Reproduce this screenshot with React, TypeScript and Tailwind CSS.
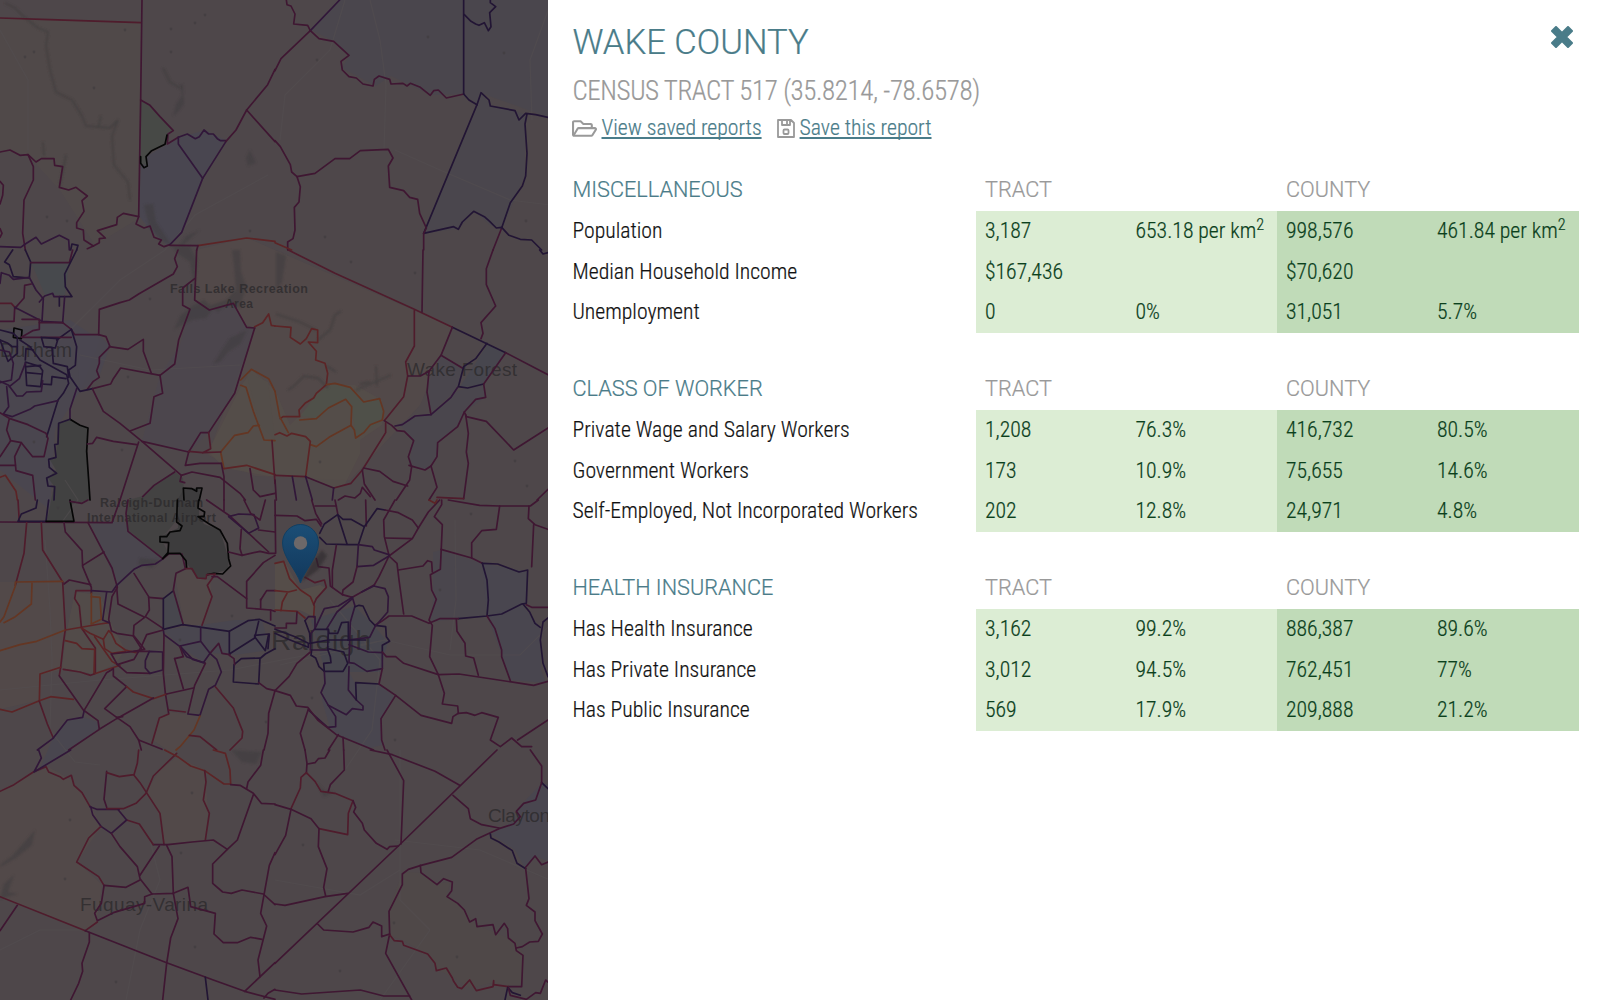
import React from "react";
import { FaRegFolderOpen } from "react-icons/fa";

type Tile = { x: number; y: number; lines: [string, string][] };

const COLORS: Record<string, string> = {
  m: "#3f1732",
  r: "#4f1c2c",
  e: "#5c2426",
  p: "#311739",
  n: "#221534",
  o: "#643623",
  k: "#060606",
};

// Tract boundaries, stored per map tile in third-of-a-pixel units.
const TILES: Tile[] = [
  {
    x: 0, y: 0,
    lines: [
      ["r", "0,54 150,59 422,68"],
      ["m", "426,0 422,300 416,650 408,672 432,684 450,678 462,712 484,720 476,732 492,740 510,734"],
      ["m", "422,300 450,316 480,350 520,392 504,402 502,432 535,412"],
      ["k", "501,405 495,433 455,452 438,470 442,498 432,503 422,490 422,470"],
      ["p", "535,412 562,402 586,416 598,410 612,390 626,402 640,402 652,416 662,422 678,422"],
      ["p", "535,412 535,432 608,535"],
      ["p", "678,424 608,535 545,697 510,734"],
      ["m", "825,208 803,254 740,330 708,390 678,424"],
      ["m", "740,330 825,425"],
      ["m", "0,456 30,450 60,466 84,464 108,486 124,476 162,476 164,496 188,500 178,562 206,570 228,562 262,588 246,602 252,634 230,668 230,684 250,690 252,720 280,738 262,746"],
      ["m", "84,464 100,500 100,540 72,600 68,700 76,750"],
      ["m", "0,544 10,556 8,586 0,612"],
      ["m", "0,686 6,700 0,712"],
      ["m", "280,738 298,728 298,716 316,714 292,692 350,674 352,652 370,640 416,650"],
      ["p", "0,740 62,742 76,732 108,712 124,732 156,716 178,706 206,720 208,750"],
      ["n", "212,750 216,732 234,736 230,750"],
      ["e", "594,737 740,714 825,724"],
      ["m", "510,736 594,737 590,750"],
    ],
  },
  {
    x: 275, y: 0,
    lines: [
      ["m", "34,0 36,14 48,18 60,42 56,72 98,76 106,92 132,116 176,124 222,166 198,184 202,210 222,230 244,234 264,252 294,258 298,238 312,228 344,238 348,252 384,250 396,258 406,250 436,262 466,286 476,272 490,270 514,294 567,282"],
      ["p", "194,0 106,92"],
      ["m", "106,92 18,176 0,212"],
      ["n", "566,0 566,282 582,300 606,314"],
      ["n", "568,44 588,64 602,72 612,76 628,68 640,92 648,80 644,38 662,20 646,8 646,0"],
      ["n", "606,314 618,278 642,300 646,318 720,332 732,360 752,340 782,344 819,352"],
      ["n", "756,342 750,372 756,460 752,528 742,558 706,608 680,684"],
      ["m", "680,684 654,750"],
      ["n", "606,314 446,700"],
      ["n", "446,700 536,680 550,688 562,666 596,634 628,650 644,664 664,684 680,682 702,706 736,718 770,720 800,750"],
      ["m", "0,422 16,440 46,494 50,516 66,530 76,560 72,606 58,622 60,690 54,716 38,726 38,750"],
      ["m", "66,530 120,520 180,476 224,476 256,452 340,448 354,474 340,498 344,562 386,572 404,592 428,598 434,640 454,684 446,700 446,750"],
      ["e", "0,728 50,750"],
    ],
  },
  {
    x: 0, y: 250,
    lines: [
      ["n", "38,0 14,36 28,44 40,80 88,84 92,36 76,0"],
      ["m", "92,38 208,38 218,0"],
      ["n", "230,0 194,72 196,110 216,140 178,140 178,168"],
      ["p", "0,100 4,68 28,76 40,88 88,82 108,120 130,146 126,214 188,218 194,140"],
      ["p", "118,156 134,138 158,130 162,140 178,140"],
      ["r", "0,160 34,160 48,176"],
      ["m", "0,214 42,214 44,176 72,144 74,106 94,102"],
      ["p", "44,172 126,214"],
      ["k", "42,234 66,240 64,266 40,262 42,234"],
      ["m", "66,208 118,208 118,238 98,242 64,262"],
      ["m", "188,218 214,238 224,254 296,254 318,260 330,290 298,322 298,340 290,362 298,382 280,394 262,418"],
      ["m", "296,254 298,178 360,158 388,150 416,132 520,72 532,50 524,26 534,0"],
      ["n", "214,238 230,290 226,346 206,360 210,380 240,424 278,416"],
      ["n", "170,270 214,238"],
      ["m", "118,218 188,218"],
      ["m", "66,262 214,262"],
      ["n", "0,240 40,250 52,262 52,310 24,334 0,270"],
      ["n", "0,270 24,280 36,290 52,290"],
      ["n", "60,270 90,290 120,330 200,374 206,400 190,430 174,450 140,560"],
      ["n", "76,336 120,350 128,362 122,410 80,406 76,336"],
      ["n", "80,368 124,372"],
      ["n", "80,350 122,346"],
      ["n", "124,262 174,266 166,294 132,290 124,262"],
      ["n", "156,294 160,340 202,350 206,382"],
      ["n", "76,330 78,296 100,300"],
      ["p", "0,300 28,306 40,340 34,390 0,398"],
      ["n", "124,402 154,404 156,380 198,386"],
      ["p", "28,410 58,386 76,340"],
      ["p", "0,394 26,406 50,438 68,438 80,426 124,424 128,392"],
      ["p", "20,410 26,470 10,492 36,500 90,478 104,468 174,452"],
      ["m", "0,488 30,506 84,524 138,550 144,566 132,620 98,620 64,578 32,572 20,540 28,506"],
      ["m", "64,578 44,620 48,662 98,676 106,750"],
      ["m", "0,646 46,646"],
      ["m", "32,572 0,620"],
      ["e", "0,682 16,676 48,724 52,750"],
      ["p", "230,416 210,478 210,506"],
      ["m", "278,416 332,402 340,386 362,354 480,376"],
      ["m", "328,290 384,298 430,268 430,304 454,370"],
      ["m", "480,376 488,430 462,440 450,520 392,542"],
      ["m", "278,418 310,484 360,520 426,574 566,606"],
      ["m", "566,606 602,548 626,548 704,430 764,234"],
      ["m", "480,376 524,342 536,270 570,178 548,166 548,114 584,86"],
      ["m", "590,0 584,150 628,180 700,160 740,232 764,234"],
      ["e", "764,230 788,218 806,192 814,226 825,228"],
      ["o", "722,390 754,358 806,386 825,424"],
      ["o", "722,406 738,412 760,484 792,570 825,572"],
      ["o", "778,526 760,528 744,548 704,556 662,606 672,656"],
      ["e", "672,656 740,646 825,674"],
      ["r", "626,548 632,596 608,608 662,606"],
      ["m", "566,606 556,646 600,640 664,640"],
      ["r", "566,604 608,608"],
      ["k", "210,508 240,526 264,534 260,604 266,690 270,750"],
      ["n", "210,508 176,520 174,582 164,584 168,622 146,628 148,652 170,670 140,684 144,708 164,710 162,750"],
      ["m", "262,582 278,580 290,562 340,574 410,584"],
      ["m", "416,576 360,750"],
      ["m", "426,574 544,676 540,694 554,698"],
      ["m", "428,740 462,706 524,666"],
      ["m", "544,676 576,666 660,682 720,730 736,750"],
      ["m", "664,640 672,680 672,750"],
      ["k", "552,750 550,714 576,716 590,724 590,714 606,714 598,750"],
      ["m", "750,656 760,720 780,740 825,730"],
      ["r", "816,572 825,700"],
    ],
  },
  {
    x: 275, y: 250,
    lines: [
      ["r", "40,0 180,70 418,178 532,232"],
      ["m", "444,0 441,186"],
      ["n", "532,232 692,308"],
      ["m", "692,308 819,374"],
      ["m", "654,0 634,56 634,104 662,168 618,218 624,250 618,266"],
      ["n", "794,0 804,12 819,8"],
      ["r", "418,182 418,288 392,336 398,378 386,440 328,512"],
      ["m", "532,232 498,316 462,364 456,426 468,494"],
      ["m", "498,316 562,354"],
      ["m", "400,378 436,378 462,364"],
      ["n", "636,280 602,326 566,350 550,410 578,414 626,402"],
      ["m", "692,308 626,402 632,442 602,448 568,486 548,530 488,578 486,620 468,648 450,660 402,646"],
      ["p", "548,412 528,442 468,494 420,498 382,524 360,528"],
      ["m", "328,512 350,526 366,542 388,544 416,572 400,620 410,650 404,690 364,750"],
      ["e", "0,228 48,232 46,262 76,282 94,266 110,236 128,240 128,278 100,276 124,304 122,330 150,340 158,370 154,404 124,430 116,444 90,460 72,480 74,500 24,500 16,506"],
      ["o", "154,404 180,400 226,412 266,456 314,446 326,484 322,510 286,524 266,548 242,564 238,540 228,526 162,562 124,590 106,584"],
      ["o", "74,510 124,506 160,474 212,448 230,470 228,526"],
      ["o", "0,424 14,500 40,548"],
      ["e", "0,554 14,548 36,558 50,550 92,560 106,574 92,680"],
      ["r", "0,676 92,680"],
      ["r", "176,714 228,700 262,660 332,548 332,518"],
      ["m", "92,680 176,714"],
      ["m", "266,654 314,664 354,694 398,708"],
      ["p", "52,680 64,750"],
      ["p", "92,680 112,750"],
      ["p", "176,714 172,750"],
      ["m", "262,660 268,702 300,750"],
      ["m", "190,750 210,738 240,744 256,730 262,712 286,740"],
      ["m", "568,486 574,500 634,514 716,600 819,534"],
      ["m", "572,494 580,550 574,606 580,640 566,746"],
      ["m", "468,648 486,712 462,750"],
      ["r", "486,742 566,746"],
      ["m", "786,750 819,718"],
      ["m", "0,690 4,750"],
    ],
  },
  {
    x: 0, y: 500,
    lines: [
      ["m", "0,66 336,68 360,0"],
      ["r", "54,0 58,66"],
      ["n", "112,0 108,24 64,42 54,64 138,64 146,0"],
      ["k", "138,64 222,64 210,0"],
      ["m", "210,4 246,10 264,0"],
      ["r", "80,68 72,160 46,256"],
      ["r", "188,246 196,388 190,430 182,502 178,526"],
      ["r", "124,68 128,150 188,246"],
      ["o", "0,366 12,350 46,258 46,246 188,244"],
      ["o", "96,250 94,312 46,350 12,368"],
      ["o", "0,452 60,434 110,424 196,390"],
      ["e", "196,390 300,372 328,368"],
      ["m", "192,68 196,96 246,152 248,200 274,262 274,280"],
      ["m", "264,68 308,152 336,204 352,262 336,290 326,358 334,390"],
      ["m", "248,196 312,156"],
      ["m", "192,252 208,240 272,254"],
      ["r", "274,272 228,272 224,296 238,318 244,380"],
      ["o", "274,280 274,372"],
      ["o", "274,290 300,292 304,358 274,372"],
      ["p", "274,272 336,276 350,256 402,208 426,196 466,192 490,176"],
      ["p", "320,276 308,360 328,368"],
      ["m", "384,0 378,40 384,94 488,176"],
      ["m", "402,220 446,290 448,330 436,350 490,386"],
      ["m", "446,292 490,296"],
      ["n", "490,388 490,296 518,274"],
      ["m", "490,176 506,162 546,162 556,206 528,220 520,270 550,374"],
      ["m", "350,260 354,312 434,352 402,376 400,408 424,446"],
      ["k", "532,0 530,66 546,78 540,92 510,96 500,110 480,110 480,126 506,128 504,158 488,176 506,160 540,160 558,182 560,204"],
      ["k", "596,0 594,24 614,36 612,50 594,50 628,72 660,90 682,130 686,176 692,198 668,222 642,220 622,224"],
      ["r", "556,206 576,206 592,234 618,236 620,224 646,222 622,256 636,290 606,376"],
      ["m", "636,230 652,230 740,296"],
      ["m", "620,0 690,48 806,156"],
      ["p", "686,50 716,42 762,44 776,84 746,100 686,50"],
      ["m", "724,88 720,146 726,166 780,154 806,160 825,160"],
      ["m", "686,156 726,166"],
      ["m", "672,0 672,32"],
      ["m", "732,0 752,40 780,60 796,0"],
      ["m", "776,90 825,96"],
      ["m", "825,166 790,188 740,244 740,324 812,330 825,334"],
      ["m", "812,330 812,360"],
      ["m", "782,300 800,272 825,272"],
      ["m", "782,324 782,298"],
      ["n", "490,388 548,374 606,382 688,394 744,362 778,358 825,378"],
      ["n", "688,394 688,462 764,414 776,364"],
      ["n", "764,406 806,402 796,452 764,410"],
      ["n", "808,402 804,446"],
      ["p", "602,384 602,424 630,460 610,488 578,478 540,438 602,424"],
      ["m", "630,460 656,430 666,460 690,464"],
      ["p", "490,390 492,404 540,440 560,470 616,490"],
      ["r", "246,386 286,444 286,520"],
      ["e", "244,384 270,400 310,418 326,392 334,400 348,430 376,450 408,458"],
      ["e", "196,422 230,430 246,446 284,448 282,522 360,496"],
      ["e", "284,410 336,484 352,494"],
      ["e", "310,418 314,446 336,460 376,454"],
      ["m", "334,392 350,400 402,408 434,448 402,454"],
      ["m", "334,462 352,494 402,478 424,440 440,404 490,390"],
      ["m", "334,462 402,454 430,454 448,454"],
      ["r", "282,522 272,526 240,516 190,508"],
      ["m", "352,494 380,518 450,520"],
      ["p", "436,482 448,454 488,456 488,510 450,520 436,504 436,482"],
      ["m", "492,404 490,520 496,580 506,640"],
      ["m", "524,476 550,470 540,440"],
      ["m", "524,476 550,566"],
      ["m", "616,490 584,556 564,640"],
      ["p", "564,642 600,646 626,568 646,556 664,516 650,478 630,460"],
      ["n", "700,546 702,494 724,476 780,474 776,552 700,546"],
      ["n", "782,474 796,462 825,446"],
      ["m", "688,466 702,476 704,494"],
      ["m", "776,548 800,566 825,572"],
      ["m", "825,572 806,640 804,700 792,750"],
      ["e", "182,502 120,522 118,604"],
      ["m", "178,528 250,630 294,662 298,688 206,750"],
      ["m", "340,506 320,518 252,632"],
      ["m", "340,506 340,528 380,560 314,626 350,652 368,650"],
      ["e", "380,560 400,576 460,596 500,582"],
      ["m", "500,582 580,564"],
      ["m", "460,594 350,656 298,688"],
      ["e", "0,628 36,636 118,602 152,590 220,598"],
      ["r", "118,604 142,672 160,714"],
      ["p", "252,634 248,652 202,660 158,716 112,750"],
      ["m", "350,652 390,680 416,720 424,750"],
      ["m", "416,720 486,748"],
      ["r", "506,642 478,654 456,730"],
      ["r", "506,630 556,636"],
      ["o", "600,648 582,690 540,740 528,750"],
      ["r", "646,560 700,624 728,694 726,714 690,750"],
      ["r", "568,706 600,710 650,750"],
    ],
  },
  {
    x: 275, y: 500,
    lines: [
      ["m", "0,46 66,48 90,62 124,58 138,78"],
      ["m", "110,0 122,40 140,72"],
      ["m", "120,18 184,18"],
      ["m", "180,0 188,40"],
      ["n", "134,100 148,72 188,44 204,58 228,58 268,80 250,134 218,134 154,132 134,112"],
      ["n", "188,44 216,132"],
      ["m", "272,0 274,78"],
      ["n", "268,80 306,26 330,30"],
      ["m", "330,30 370,38 412,60 430,84 412,116 342,168 312,230 296,258"],
      ["m", "360,0 326,60 328,110 342,166"],
      ["m", "330,114 410,116"],
      ["m", "494,0 460,36 430,84"],
      ["m", "500,0 500,14 478,50 502,74 496,208 466,224 470,270 484,298 462,360 472,376 464,470 490,524 508,580 502,612 548,618 550,640"],
      ["e", "462,0 480,10 486,0"],
      ["m", "520,0 614,16 674,18 766,18 790,0"],
      ["m", "674,18 664,88 620,92 590,128 590,174"],
      ["m", "762,18 760,56 780,74 819,88"],
      ["m", "776,74 770,200"],
      ["m", "498,148 590,174 622,190"],
      ["n", "622,190 668,192 732,216 758,210 754,310 740,312 680,342 636,348 550,356"],
      ["n", "622,190 636,240 640,300 636,348"],
      ["m", "550,356 494,356 462,370 410,348 342,348 320,364 300,376"],
      ["m", "370,210 444,198 458,182 470,186 472,216"],
      ["m", "342,168 366,190 372,240 386,342"],
      ["p", "250,134 292,140 298,150 342,164"],
      ["p", "250,136 246,200 296,196 342,168"],
      ["m", "184,136 172,210 172,262"],
      ["m", "246,200 234,246 204,270 202,284 232,292 296,256"],
      ["m", "124,176 130,200 162,204 166,258 202,284"],
      ["e", "0,190 26,184 44,236 76,270 106,290 118,318 116,352"],
      ["r", "90,232 120,248 148,240 154,262 124,296 116,314"],
      ["e", "0,272 40,276 64,270"],
      ["e", "36,280 22,306 18,332"],
      ["e", "0,330 66,334 90,354"],
      ["m", "66,336 64,370 34,370 34,384 0,384"],
      ["p", "232,292 190,318 148,326 120,386"],
      ["p", "232,296 186,336 154,388"],
      ["p", "90,362 100,350 120,350 120,386 108,400 106,450 160,450"],
      ["p", "232,292 240,318 226,366 222,486"],
      ["n", "240,320 252,316 264,318 284,360 300,376 332,380 334,410 344,424 322,436 322,456"],
      ["p", "260,276 296,258 330,266 340,290 338,336 300,380 284,412 218,420"],
      ["n", "104,430 160,420 272,420"],
      ["n", "0,388 60,410 100,430 100,442 40,418 0,400"],
      ["n", "90,362 104,400 106,430"],
      ["n", "120,388 160,388 162,400 188,400 200,368 220,366 220,420"],
      ["n", "160,388 158,446 206,456 218,490 204,514 148,514 146,490 168,488 166,470 158,448"],
      ["n", "110,450 108,466 122,474 132,500 148,514"],
      ["p", "222,434 280,456 322,458 322,506 276,514 238,490 222,488"],
      ["m", "106,456 66,490 42,530 0,572"],
      ["p", "148,516 150,550 138,578 160,616 214,644 232,626 264,630 264,618 244,600 220,570 222,500"],
      ["p", "160,616 182,650 182,680 158,682 100,630"],
      ["n", "244,600 242,548 312,552"],
      ["m", "322,506 312,552 362,586 438,646 530,670 534,650 550,640 574,638 600,646 620,638 670,652 646,720 676,740 710,714 740,740 770,740"],
      ["m", "362,586 318,656 320,720 330,750"],
      ["m", "322,456 334,470 362,470 386,490 490,524 552,522 776,556 819,544"],
      ["m", "0,572 46,586 64,618 98,622 128,660 184,704 296,750"],
      ["m", "100,628 76,700 90,750"],
      ["m", "190,704 160,750"],
      ["m", "204,712 206,750"],
      ["m", "544,358 546,394 570,430 572,468 596,474 610,526"],
      ["m", "636,348 660,386 680,450 680,470 706,542"],
      ["n", "744,312 764,336 780,370 796,382"],
      ["m", "754,314 770,322 819,322"],
      ["n", "819,354 804,366 796,420 804,490 819,530"],
      ["m", "728,720 819,660"],
      ["m", "0,0 2,160"],
    ],
  },
  {
    x: 0, y: 750,
    lines: [
      ["r", "0,124 42,104 100,66 138,50 146,66 180,80 190,88 214,76 222,106 246,128 270,170"],
      ["p", "116,0 124,24 102,66 212,0"],
      ["p", "270,170 290,178 358,178"],
      ["r", "320,176 370,176 408,160 438,130 460,78 530,10"],
      ["m", "320,64 312,148 320,172"],
      ["r", "320,68 358,80 402,74 412,40 416,0"],
      ["r", "402,76 420,98 480,190 492,284"],
      ["e", "494,0 536,22 572,48 614,62 672,102 692,102 690,60 676,10 640,0"],
      ["m", "692,104 720,106 760,130 784,160 825,162"],
      ["m", "790,0 782,46 744,96 740,116"],
      ["r", "614,62 618,96 610,150 628,190 616,270"],
      ["m", "760,134 712,270 682,298 638,342 638,400 668,426 694,430 726,420 790,432 825,464"],
      ["m", "460,284 504,284 576,276 640,270 682,298"],
      ["r", "380,210 418,222 460,284"],
      ["p", "355,180 380,210 334,250 304,230 278,194 272,170"],
      ["r", "302,230 266,264 230,336 296,380 312,406"],
      ["m", "334,250 360,290 412,350 420,386 456,432 520,430 516,320 500,286"],
      ["m", "478,288 420,376"],
      ["m", "312,406 378,412 420,390"],
      ["m", "312,408 304,460 284,490 292,512 340,488 434,460 434,440 456,432"],
      ["r", "292,516 256,542"],
      ["r", "0,440 256,542"],
      ["m", "256,542 500,638 640,690 734,724 825,748"],
      ["m", "52,466 0,542"],
      ["m", "268,548 268,576 246,640 248,664 236,700 212,750"],
      ["m", "520,430 534,506 512,564 500,640 488,750"],
      ["m", "520,430 564,412 572,470 646,490 642,552 670,578 712,578 752,562 786,568"],
      ["m", "825,308 808,346 782,490 800,528 774,630 780,680"],
      ["m", "734,724 825,638"],
      ["n", "616,682 624,750"],
      ["m", "792,744 804,730 825,718"],
    ],
  },
  {
    x: 275, y: 750,
    lines: [
      ["m", "90,0 96,40 94,70"],
      ["m", "98,42 120,38 130,26 150,24 164,0"],
      ["m", "206,0 208,60 166,104 160,124"],
      ["r", "48,176 76,114 78,82 94,68 120,94 138,124 180,130 234,152 220,190 218,254 132,236"],
      ["m", "234,152 242,172 236,186 262,220 268,240 304,280 336,298 344,290 370,288"],
      ["m", "0,164 48,178 108,206 132,236 130,290 156,356 146,412 152,438"],
      ["m", "48,178 32,256 0,314"],
      ["m", "666,0 370,288 0,640"],
      ["m", "286,0 352,14 480,64 554,106"],
      ["m", "336,0 386,92 378,282"],
      ["m", "534,136 580,176 586,206 620,224 672,234"],
      ["m", "766,0 800,48 800,98"],
      ["n", "800,98 819,116"],
      ["m", "800,98 782,150 746,160 724,184 736,200 716,222 672,236 604,268 530,322 438,346 400,358 382,372 382,404 342,484 344,552 332,610 410,750"],
      ["n", "646,252 648,264 672,276 712,302 726,340 752,356"],
      ["m", "752,352 780,318 800,344 819,336"],
      ["m", "752,356 762,446 754,466 780,486 780,512 802,552 790,574 764,576 742,590 724,594"],
      ["m", "436,346 438,368 486,404 506,386 532,396 530,422 516,440 548,460 568,480 584,516 602,506 606,530 636,526 654,524 662,554 688,520 698,536 700,564 720,580 724,602 744,616 740,710 700,710"],
      ["r", "700,710 656,704 656,692 654,710 604,722 584,690 560,716 548,712 536,694 532,684 514,654 484,662 480,640 458,612 386,586 382,574 358,572 344,554"],
      ["m", "344,552 320,560 320,528 294,516 282,532 234,546 146,540 128,522"],
      ["m", "0,462 30,466 150,440 218,430"],
      ["m", "0,720 80,732 256,720 326,738 404,738"],
      ["n", "690,750 698,712 712,728 736,736"],
      ["m", "700,714 706,736 754,748 782,728 796,730 812,690 819,696"],
    ],
  },
];

// Soft colour areas under the boundaries, in map pixels.
const AREAS: [string, string][] = [
  ["#514a49", "0,18 141,22 139,218 95,245 60,190 28,155 0,150"],
  ["#534a49", "196,250 247,238 452,327 420,405 350,480 255,476 208,455 255,328 246,325 233,303 210,310 195,300"],
  ["#494751", "141,162 144,158 166,145 178,138 205,130 225,140 203,178 182,232 168,246 150,230 139,216"],
  ["#4a464d", "340,0 311,30 333,41 349,56 342,68 376,86 391,76 431,95 464,94 478,105 481,93 550,118 550,0"],
  ["#4a464d", "478,105 481,93 492,106 515,111 525,114 525,175 502,228 490,225 474,211 458,229 424,233"],
  ["#4a4750", "0,330 70,320 100,340 82,388 55,430 50,510 0,470"],
  ["#464a4d", "31,262 69,262 65,295 45,295"],
  ["#4a4750", "75,335 99,335 110,346 98,380 80,391"],
  ["#4c474e", "160,375 180,345 190,308 210,310 233,303 247,327 255,328 235,394 208,433 190,452 142,441"],
  ["#554e49", "208,452 241,386 252,370 275,390 290,425 330,385 355,385 382,400 382,425 360,440 360,454 345,484 333,488 306,477 268,476 225,468"],
  ["#4f5149", "301,416 316,394 333,384 350,388 364,402 380,398 384,414 380,422 365,432 356,438 352,405 345,399 328,408 316,418"],
  ["#534e49", "246,372 268,382 275,440 260,425"],
  ["#534a49", "0,582 62,582 66,630 60,670 40,675 40,700 0,709"],
  ["#544c49", "75,592 100,595 112,625 125,650 115,664 94,674 62,668 66,635"],
  ["#534a49", "0,790 48,767 72,780 92,808 101,826 77,862 102,885 96,925 86,930 0,897"],
  ["#534a49", "146,793 160,770 177,757 205,770 208,812 205,840 165,844 158,812"],
  ["#534a49", "153,740 160,718 169,712 200,716 194,730 178,748 175,755"],
  ["#534a49", "175,575 190,568 196,578 210,580 212,597 202,625 184,625"],
  ["#574f49", "275,563 285,562 300,590 320,585 326,588 316,600 314,617 300,610 275,610"],
  ["#494750", "325,672 347,668 355,683 378,684 394,696 382,718 382,745 370,748 336,734 330,728 322,700"],
  ["#47464f", "311,620 330,614 355,606 375,627 388,642 380,672 325,672"],
  ["#4a474e", "433,552 441,550 482,563 488,600 487,616 430,622 433,600"],
  ["#494750", "482,563 528,572 526,604 502,614 487,616"],
  ["#494750", "487,616 522,605 540,627 541,670 546,683 510,680 502,655"],
  ["#47464f", "461,385 488,344 506,354 484,384 460,388"],
  ["#4a474e", "428,382 441,355 463,370 456,390 430,414"],
  ["#4a474e", "457,391 483,385 486,397 464,412 457,427 437,443 437,457 425,470 409,465 413,441 402,427 395,426 415,416 431,414"],
  ["#494750", "163,630 200,625 235,620 262,620 270,650 235,655 212,653 203,662 182,648"],
  ["#4a474f", "90,522 125,522 128,530 162,558 135,570 118,586"],
  ["#47474e", "163,600 173,592 183,625 163,630"],
  ["#494750", "53,738 67,720 84,717 98,722 98,729 70,750 40,768"],
  ["#494750", "491,834 515,820 518,808 542,783 550,785 550,862 535,856 525,868 515,850"],
  ["#504948", "390,905 389,935 403,940 428,955 438,970 455,978 470,988 490,983 520,986 524,955 515,940 500,935 476,925 458,903 447,895 450,882 437,884 421,873 403,872"],
  ["#464a45", "141,101 150,106 173,131 167,134 165,145 152,150 146,156 147,166 141,163"],
  ["#3f413f", "70,419 80,426 88,428 87,450 90,500 72,504 73,521 47,521 54,486 48,478 56,470 50,460 56,457 58,424"],
  ["#424241", "143,496 155,485 175,472 183,478 184,490 177,500 177,520 166,533 160,537 168,552 163,558 128,530 126,514 128,500"],
  ["#3b3b3b", "184,489 200,488 199,515 204,524 220,530 229,560 228,570 206,575 205,578 197,578 190,568 180,553 168,552 168,542 160,542 160,537 178,528 177,500"],
];

const WATER = [
  "M144 205 L153 204 156 222 165 235 172 246 161 240 149 226Z",
  "M178 248 L186 236 200 230 182 246Z",
  "M172 246 L190 246 198 262 194 286 190 262 178 254Z",
  "M232 250 L240 250 241 272 246 286 240 308 228 304 218 312 208 306 226 300 236 290 234 266Z",
  "M174 330 L180 316 192 306 204 300 214 308 206 318 192 320 180 326Z",
  "M213 364 L222 350 230 338 247 330 240 344 228 352 220 362Z",
  "M173 116 L176 104 182 96 180 84 183 84 184 104 178 112Z",
  "M0 865 L12 856 28 838 35 830 32 845 16 858 0 867Z",
  "M0 898 L4 884 14 875 8 892 18 894 0 899Z",
  "M231 750 L262 752 256 764 242 762Z",
  "M316 782 L324 790 334 792 324 797Z",
  "M276 252 L286 256 282 282 276 290Z",
  "M140 558 L160 560 152 568 138 564Z",
  "M246 158 L250 150 256 163 248 166Z",
];

const STREAMS = [
  "M5 3 L15 8 22 15 38 28 48 32 46 46 50 70 56 92 72 100 82 116 86 126 110 128 118 120 112 136",
  "M98 128 L101 116 M112 136 L114 165 128 182 130 200",
  "M43 142 L44 156 M66 155 L60 185 M163 68 L170 82 180 88",
  "M328 388 L318 378 304 376 294 386 288 390",
  "M356 390 L375 382 391 375 M376 366 L377 386 M360 384 L370 382",
  "M318 340 L330 330 335 315 341 311",
  "M276 314 L300 322 316 330 M327 366 L336 372",
];

const ROADS = [
  "M0 30 L28 80 28 150",
  "M345 0 L330 50 285 95 280 140",
  "M370 0 L380 40 386 85 384 150",
  "M550 5 L530 60 532 120",
  "M395 150 L440 170 510 200 550 205",
  "M60 340 L120 280 165 250 195 215 268 175",
  "M80 355 L150 370 240 365",
  "M45 540 L50 610 52 660 50 730 75 762 100 765",
  "M0 690 L100 680 230 670 385 640",
  "M280 665 L385 640 450 655 520 655 550 625",
  "M330 600 L380 660 372 730 345 770",
  "M395 840 L480 850 550 880",
  "M400 750 L400 900 430 930 M275 880 L360 895 400 870",
  "M430 930 L380 1000 M126 1000 L140 930 160 880 150 840",
  "M455 520 L456 600 450 650",
  "M0 950 L40 930 90 930",
  "M65 480 L78 500 62 522",
];

const SPECKS = [
  [34, 52], [25, 57], [94, 88], [195, 23], [205, 15], [171, 29], [171, 52], [125, 30], [47, 217], [67, 221],
  [428, 37], [504, 53], [317, 60], [325, 237], [351, 262], [150, 299], [128, 377], [250, 231], [415, 273],
  [34, 442], [58, 508], [320, 462], [515, 461], [180, 640], [312, 698], [266, 722], [192, 793], [70, 820],
  [181, 853], [195, 947], [116, 982], [303, 845], [340, 971], [457, 957], [394, 923], [526, 221], [440, 590],
  [471, 514], [395, 740], [65, 879], [122, 450], [232, 616], [527, 486],
];

function CountyMap() {
  return (
    <svg viewBox="0 0 548 1000" className="block h-full w-full" aria-label="Census tract map">
      <defs>
        <filter id="soft" x="-20%" y="-20%" width="140%" height="140%">
          <feGaussianBlur stdDeviation="1" />
        </filter>
        <linearGradient id="pin" x1="0" y1="0" x2="0" y2="1">
          <stop offset="0" stopColor="#1b4e76" />
          <stop offset="1" stopColor="#12385c" />
        </linearGradient>
      </defs>
      <rect width="548" height="1000" fill="#4e474a" />
      {AREAS.map(([fill, points], i) => (
        <polygon key={i} points={points} fill={fill} opacity="0.85" />
      ))}
      <g fill="#403d3f" opacity="0.6" filter="url(#soft)">
        {WATER.map((d) => (
          <path key={d} d={d} />
        ))}
      </g>
      <g fill="none" stroke="#403d3e" strokeWidth="1.8" opacity="0.75" filter="url(#soft)">
        {STREAMS.map((d) => (
          <path key={d} d={d} />
        ))}
      </g>
      <g fill="none" stroke="#534e50" strokeWidth="1.2" opacity="0.6">
        {ROADS.map((d) => (
          <path key={d} d={d} />
        ))}
      </g>
      <g fill="#3f3b3e" opacity="0.6">
        {SPECKS.map(([x, y]) => (
          <circle key={`${x}-${y}`} cx={x} cy={y} r="1.4" />
        ))}
      </g>
      <g fill="#2c2a2c" fillOpacity="0.8" fontFamily="'Liberation Sans', Arial, sans-serif">
        <text x="170" y="293" fontSize="12.5" fontWeight="700" textLength="138">Falls Lake Recreation</text>
        <text x="225" y="308" fontSize="12" fontWeight="700" textLength="28">Area</text>
        <text x="0" y="357" fontSize="19.5" textLength="72">Durham</text>
        <text x="407" y="376" fontSize="19" textLength="110">Wake Forest</text>
        <text x="100" y="507" fontSize="12.5" fontWeight="700" textLength="103">Raleigh-Durham</text>
        <text x="87" y="522" fontSize="12.5" fontWeight="700" textLength="129">International Airport</text>
        <text x="271" y="650" fontSize="28" textLength="100">Raleigh</text>
        <text x="80" y="911" fontSize="19" textLength="128">Fuquay-Varina</text>
        <text x="488" y="822" fontSize="19" textLength="62">Clayton</text>
      </g>
      <g fill="none" strokeWidth="5" strokeLinejoin="round" strokeLinecap="round">
        {TILES.map((t) => (
          <g key={`${t.x}-${t.y}`} transform={`translate(${t.x} ${t.y}) scale(0.33333)`}>
            {t.lines.map(([c, points], i) => (
              <polyline key={i} points={points} stroke={COLORS[c]} />
            ))}
          </g>
        ))}
      </g>
      <path d="M301 582 L312 562 322 550 327 556 318 570Z" fill="#2c282a" opacity="0.55" filter="url(#soft)" />
      <path
        d="M300.5 583 C297 571 282.500 557 282.500 543 a18 18.500 0 0 1 36 0 C318.500 557 304 571 300.500 583Z"
        fill="url(#pin)"
        stroke="#123f62"
        strokeWidth="1"
      />
      <circle cx="300.500" cy="543" r="6.700" fill="#6d6869" />
    </svg>
  );
}

const SQ = "km²";
type Row = [string, string, string, string, string];
const SECTIONS: { title: string; rows: Row[] }[] = [
  {
    title: "MISCELLANEOUS",
    rows: [
      ["Population", "3,187", "653.18 per " + SQ, "998,576", "461.84 per " + SQ],
      ["Median Household Income", "$167,436", "", "$70,620", ""],
      ["Unemployment", "0", "0%", "31,051", "5.7%"],
    ],
  },
  {
    title: "CLASS OF WORKER",
    rows: [
      ["Private Wage and Salary Workers", "1,208", "76.3%", "416,732", "80.5%"],
      ["Government Workers", "173", "10.9%", "75,655", "14.6%"],
      ["Self-Employed, Not Incorporated Workers", "202", "12.8%", "24,971", "4.8%"],
    ],
  },
  {
    title: "HEALTH INSURANCE",
    rows: [
      ["Has Health Insurance", "3,162", "99.2%", "886,387", "89.6%"],
      ["Has Private Insurance", "3,012", "94.5%", "762,451", "77%"],
      ["Has Public Insurance", "569", "17.9%", "209,888", "21.2%"],
    ],
  },
];

function Value({ text }: { text: string }) {
  if (!text.endsWith("²")) return <>{text}</>;
  return (
    <>
      {text.slice(0, -1)}
      <sup className="text-[75%]">2</sup>
    </>
  );
}

function Section({ title, rows }: { title: string; rows: Row[] }) {
  return (
    <section className="mb-[37px] grid grid-cols-[403.500px_150.500px_150.500px_151px_151px] text-[21.700px]">
      <h3 className="h-10 font-[Roboto] leading-[37px] text-[#4a7c89]">{title}</h3>
      <div className="col-span-2 h-10 pl-[9px] font-[Roboto] leading-[37px] text-[#999]">TRACT</div>
      <div className="col-span-2 h-10 pl-[9px] font-[Roboto] leading-[37px] text-[#999]">COUNTY</div>
      {rows.map((r) => (
        <React.Fragment key={r[0]}>
          {r.map((v, i) => (
            <div
              key={i}
              className={
                "h-[40.670px] whitespace-nowrap leading-[40px] " +
                (i === 0
                  ? "text-[#111]"
                  : i < 3
                    ? "bg-[#dcedd4] pl-[9px] text-[#0b401c]"
                    : "bg-[#c0dbb8] pl-[9px] text-[#0b401c]")
              }
            >
              <Value text={v} />
            </div>
          ))}
        </React.Fragment>
      ))}
    </section>
  );
}

export default function App() {
  return (
    <div className="flex h-[1000px] w-[1600px] overflow-hidden bg-white">
      <aside className="h-full w-[548px] shrink-0">
        <CountyMap />
      </aside>
      <main className="flex-1 pl-[24.500px] pr-[21px] font-['Roboto_Condensed',Roboto,sans-serif] font-light [-webkit-text-stroke:0.2px]">
        <header className="flex h-[171px] items-start justify-between">
          <div>
            <h1 className="mt-[22px] h-10 font-[Roboto] text-[34.600px] leading-10 text-[#4a7c89]">WAKE COUNTY</h1>
            <h2 className="mt-[11px] h-9 whitespace-nowrap text-[27px] leading-9 tracking-[-0.420px] text-[#999]">
              CENSUS TRACT 517 (35.8214, -78.6578)
            </h2>
            <div className="mt-[3px] flex h-8 items-center text-[21.700px] text-[#4a7c89]">
              <FaRegFolderOpen className="-ml-px mr-[5px] h-[25px] w-[25px] text-[#999]" />
              <a className="underline decoration-2 underline-offset-[2px] [text-decoration-skip-ink:none]">View saved reports</a>
              <svg viewBox="0 0 18 19" className="ml-[15px] mr-[5px] h-[19px] w-[18px]" fill="none" stroke="#999" strokeWidth="1.8">
                <path d="M1 1h13l3 3v14H1Z M5 1v5h8V1 M10 2v3" strokeLinejoin="round" />
                <rect x="6.500" y="10.500" width="5" height="4.500" rx="1" />
              </svg>
              <a className="underline decoration-2 underline-offset-[2px] [text-decoration-skip-ink:none]">Save this report</a>
            </div>
          </div>
          <svg viewBox="0 0 22 22" className="mr-[6px] mt-[26px] h-[22px] w-[22px]" fill="#4a7c89" stroke="#4a7c89" strokeWidth="2" strokeLinejoin="round">
            <path d="M5 1 L11 7 17 1 21 5 15 11 21 17 17 21 11 15 5 21 1 17 7 11 1 5Z" />
          </svg>
        </header>
        {SECTIONS.map((s) => (
          <Section key={s.title} {...s} />
        ))}
      </main>
    </div>
  );
}
